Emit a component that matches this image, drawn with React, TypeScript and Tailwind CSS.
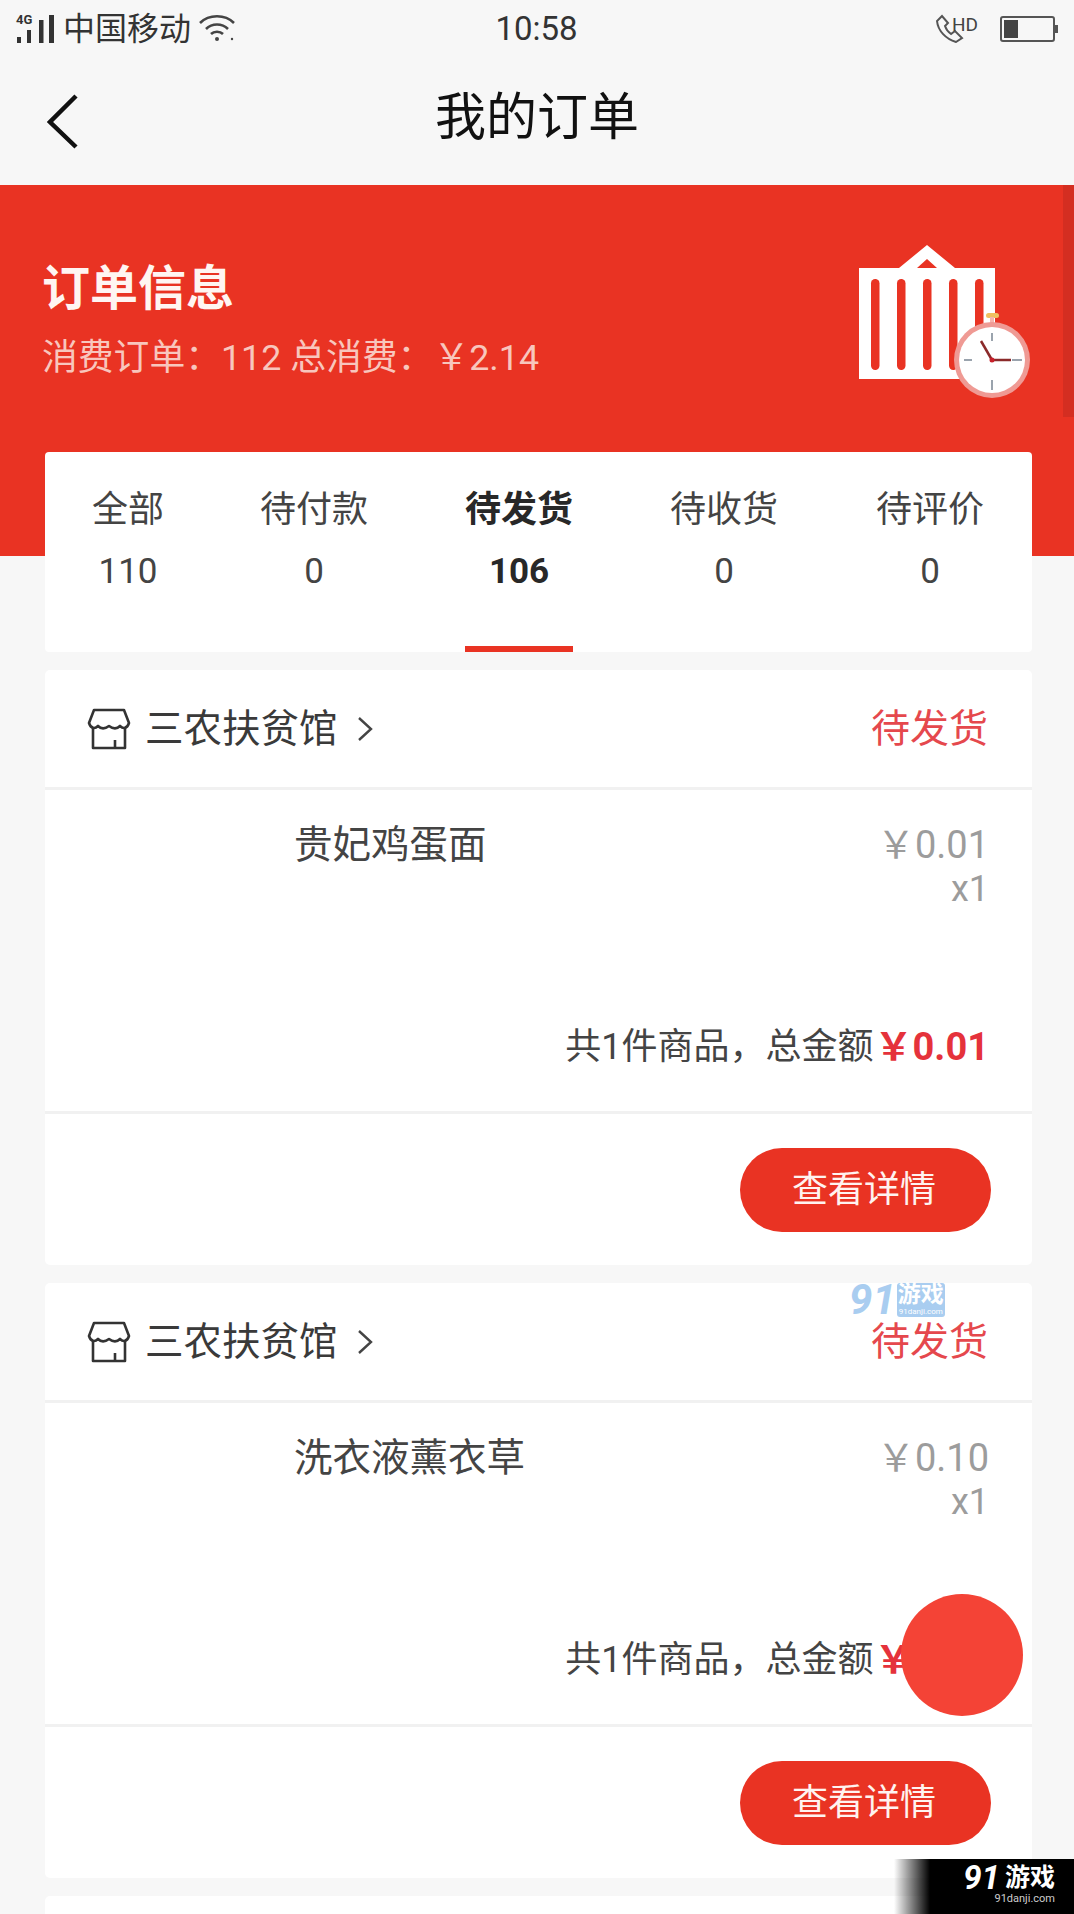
import React from "react";

const font = { fontFamily: 'Roboto, "Noto Sans CJK SC", sans-serif' };

function StatusBar() {
  return (
    <div className="flex h-[58px] items-center justify-between pl-[15px] pr-[16px] text-[#333]">
      <div className="flex w-[330px] items-center">
        <div className="relative h-[32px] w-[42px]">
          <span className="absolute left-[1px] top-[1px] text-[13px] font-bold leading-[12px]">4G</span>
          <svg width="42" height="32" viewBox="0 0 42 32" className="absolute left-0 top-0">
            <rect x="2" y="24" width="4" height="6" fill="#333" />
            <rect x="12" y="17" width="4" height="13" fill="#333" />
            <rect x="24" y="7" width="4.5" height="23" fill="#333" />
            <rect x="34" y="2" width="5" height="28" fill="#333" />
          </svg>
        </div>
        <span className="ml-[6px] text-[32px] leading-[36px]">中国移动</span>
        <svg width="38" height="30" viewBox="0 0 38 30" className="ml-[7px]" fill="none" stroke="#444" strokeWidth="2.6">
          <path d="M2 9C11 0 27 0 36 9" />
          <path d="M8 15C14 9 24 9 30 15" />
          <path d="M13 20C16 17 22 17 25 20" />
          <circle cx="19" cy="25" r="2" fill="#444" stroke="none" />
          <circle cx="34" cy="25" r="1.2" fill="#444" stroke="none" />
        </svg>
      </div>
      <span className="text-[33px] leading-[36px] text-[#333]">10:58</span>
      <div className="flex w-[330px] items-center justify-end">
        <svg width="30" height="30" viewBox="0 0 30 30" fill="none" stroke="#555" strokeWidth="2">
          <path d="M7 2L2 7C3 17 11 25 21 28L27 24L20 17L16 20C13 18 11 15 10 12L13 9Z" />
        </svg>
        <span className="mb-[8px] ml-[-13px] text-[19px] leading-[20px] text-[#444]">HD</span>
        <div className="ml-[22px] flex h-[26px] w-[55px] items-center rounded-[3px] border-2 border-[#555] p-[2px]">
          <div className="h-full w-[14px] bg-[#444]" />
        </div>
        <div className="h-[8px] w-[3px] bg-[#555]" />
      </div>
    </div>
  );
}

function NavBar() {
  return (
    <div className="relative flex h-[127px] items-center justify-center pb-[7px]">
      <svg width="32" height="56" viewBox="0 0 32 56" fill="none" stroke="#111" strokeWidth="4.5" className="absolute left-[47px] top-[36px]">
        <path d="M29 2L3 28L29 53" />
      </svg>
      <span className="text-[51px] leading-[60px] text-[#111]">我的订单</span>
    </div>
  );
}

function ContainerIcon() {
  return (
    <svg width="172" height="156" viewBox="0 0 172 156" className="shrink-0">
      <path d="M0 23H40L68 0L96 23H136V134H0Z" fill="#fff" />
      <path d="M58 23L68 14L78 23Z" fill="#e93323" />
      {[12, 38, 64, 90, 116].map((x) => (
        <rect key={x} x={x} y="34" width="8.5" height="91" rx="4.2" fill="#e93323" />
      ))}
      <rect x="127" y="68" width="13" height="5" rx="2.5" fill="#f0c060" />
      <rect x="131" y="72" width="4" height="6" fill="#f5b5ae" />
      <circle cx="133" cy="115" r="38" fill="#ef9a94" />
      <circle cx="133" cy="115" r="33" fill="#fff" />
      <g stroke="#9aa3ad" strokeWidth="2">
        <path d="M133 88V96M133 135V145M105 115H113M153 115H163" />
      </g>
      <path d="M133 115L122 96" stroke="#8b2a2a" strokeWidth="2.5" />
      <path d="M133 115H152" stroke="#8b2a2a" strokeWidth="2.5" />
      <circle cx="133" cy="115" r="2.5" fill="#c8202a" />
    </svg>
  );
}

function Tabs() {
  const tabs = [
    { label: "全部", num: "110", width: "w-[165px]", pl: "pl-[1px]" },
    { label: "待付款", num: "0", width: "w-[208px]" },
    { label: "待发货", num: "106", width: "w-[202px]", active: true },
    { label: "待收货", num: "0", width: "w-[208px]" },
    { label: "待评价", num: "0", width: "w-[204px]" },
  ];
  return (
    <div className="relative z-10 ml-[45px] mr-[42px] mt-[-104px] flex h-[200px] rounded-[4px] bg-white">
      {tabs.map((t) => (
        <div key={t.label} className={`relative flex flex-col items-center pt-[36px] ${t.width} ${t.pl ?? ""}`}>
          <span className={`text-[36px] leading-[44px] ${t.active ? "font-bold text-[#282828]" : "text-[#444]"}`}>{t.label}</span>
          <span className={`mt-[20px] text-[35px] leading-[40px] ${t.active ? "font-bold text-[#282828]" : "text-[#444]"}`}>{t.num}</span>
          {t.active && <div className="absolute bottom-0 h-[6px] w-[108px] bg-[#e93323]" />}
        </div>
      ))}
    </div>
  );
}

function ShopIcon() {
  return (
    <svg width="44" height="42" viewBox="0 0 44 42" fill="none" stroke="#333" strokeWidth="2.6" strokeLinejoin="round">
      <path d="M7 2H37L42 15C40 21 36 21 33 18C30 21 26 21 22 18C18 21 14 21 11 18C8 21 4 21 2 15Z" />
      <path d="M6 20V40H38V20" />
      <path d="M28 32V40" />
    </svg>
  );
}

function OrderCard({ name, price, total }: { name: string; price: string; total: string }) {
  return (
    <div className="ml-[45px] mr-[42px] mt-[18px] rounded-[5px] bg-white">
      <div className="flex h-[120px] items-center justify-between border-b-[3px] border-[#f1f1f1] pl-[42px] pr-[44px]">
        <div className="flex items-center">
          <ShopIcon />
          <span className="ml-[14px] text-[38.5px] leading-[48px] text-[#3a3a3a]">三农扶贫馆</span>
          <svg width="16" height="26" viewBox="0 0 16 26" fill="none" stroke="#444" strokeWidth="2.4" className="ml-[19px]">
            <path d="M2 2L14 13L2 24" />
          </svg>
        </div>
        <span className="text-[39px] leading-[48px] text-[#e5484d]">待发货</span>
      </div>
      <div className="flex h-[324px] flex-col border-b-[3px] border-[#f1f1f1] pl-[249px] pr-[43px] pt-[31px]">
        <div className="flex justify-between">
          <span className="text-[38.5px] leading-[48px] text-[#444]">{name}</span>
          <div className="mt-[2px] flex flex-col items-end text-[#9c9c9c]">
            <span className="text-[38px] leading-[44px]">{price}</span>
            <span className="text-[36px] leading-[44px]">x1</span>
          </div>
        </div>
        <div className="ml-[-249px] mt-[114px] flex items-center justify-end">
          <span className="text-[36px] leading-[44px] text-[#444]">共1件商品，总金额</span>
          <span className="ml-[1px] text-[38px] font-bold leading-[44px] text-[#e5323b]">{total}</span>
        </div>
      </div>
      <div className="flex h-[151px] justify-end pr-[41px] pt-[34px]">
        <div className="flex h-[84px] w-[251px] items-center justify-center rounded-full bg-[#e93323] pr-[3px] text-[36px] text-[#fff3f0]">查看详情</div>
      </div>
    </div>
  );
}

export default function App() {
  return (
    <div style={font} className="relative h-[1914px] w-[1074px] overflow-hidden bg-[#f7f7f7]">
      <StatusBar />
      <NavBar />
      <div className="relative flex h-[371px] items-start justify-between bg-[#e93323] pl-[42px] pr-[43px]">
        <div className="pt-[74px]">
          <div className="text-[48px] font-bold leading-[60px] text-[#fff5f2]">订单信息</div>
          <div className="mt-[17px] text-[35.8px] leading-[44px] text-[#f8c6bd]">消费订单：112 总消费：￥2.14</div>
        </div>
        <div className="pt-[60px]">
          <ContainerIcon />
        </div>
        <div className="absolute right-0 top-0 h-[232px] w-[11px] bg-[#d42e21]" />
      </div>
      <Tabs />
      <OrderCard name="贵妃鸡蛋面" price="￥0.01" total="￥0.01" />
      <OrderCard name="洗衣液薰衣草" price="￥0.10" total="￥0.10" />
      <div className="ml-[45px] mr-[42px] mt-[18px] h-[60px] rounded-[5px] bg-white" />

      {/* floating button */}
      <div className="absolute left-[901px] top-[1594px] h-[122px] w-[122px] rounded-full bg-[#f44336]" />

      {/* watermark over the second card */}
      <div className="absolute left-[849px] top-[1282px] flex h-[36px] items-center">
        <span className="text-[42px] font-bold italic leading-[36px] text-[#a9cdf0]">91</span>
        <div className="ml-[1px] flex w-[48px] flex-col items-center rounded-[3px] bg-[#a9cdf0] text-white">
          <span className="text-[23px] font-bold leading-[24px]">游戏</span>
          <span className="text-[8px] leading-[10px]">91danji.com</span>
        </div>
      </div>

      {/* site mark in the corner */}
      <div className="absolute bottom-0 right-0 flex h-[55px] w-[180px] justify-end bg-gradient-to-r from-transparent to-black to-[20%] pr-[19px] pt-[5px] text-white">
        <div className="flex flex-col items-end">
          <div className="flex items-center">
            <span className="text-[33px] font-bold italic leading-[28px]">91</span>
            <span className="ml-[5px] text-[25px] font-bold leading-[28px]">游戏</span>
          </div>
          <span className="text-[11px] leading-[14px] text-[#ccc]">91danji.com</span>
        </div>
      </div>
    </div>
  );
}
